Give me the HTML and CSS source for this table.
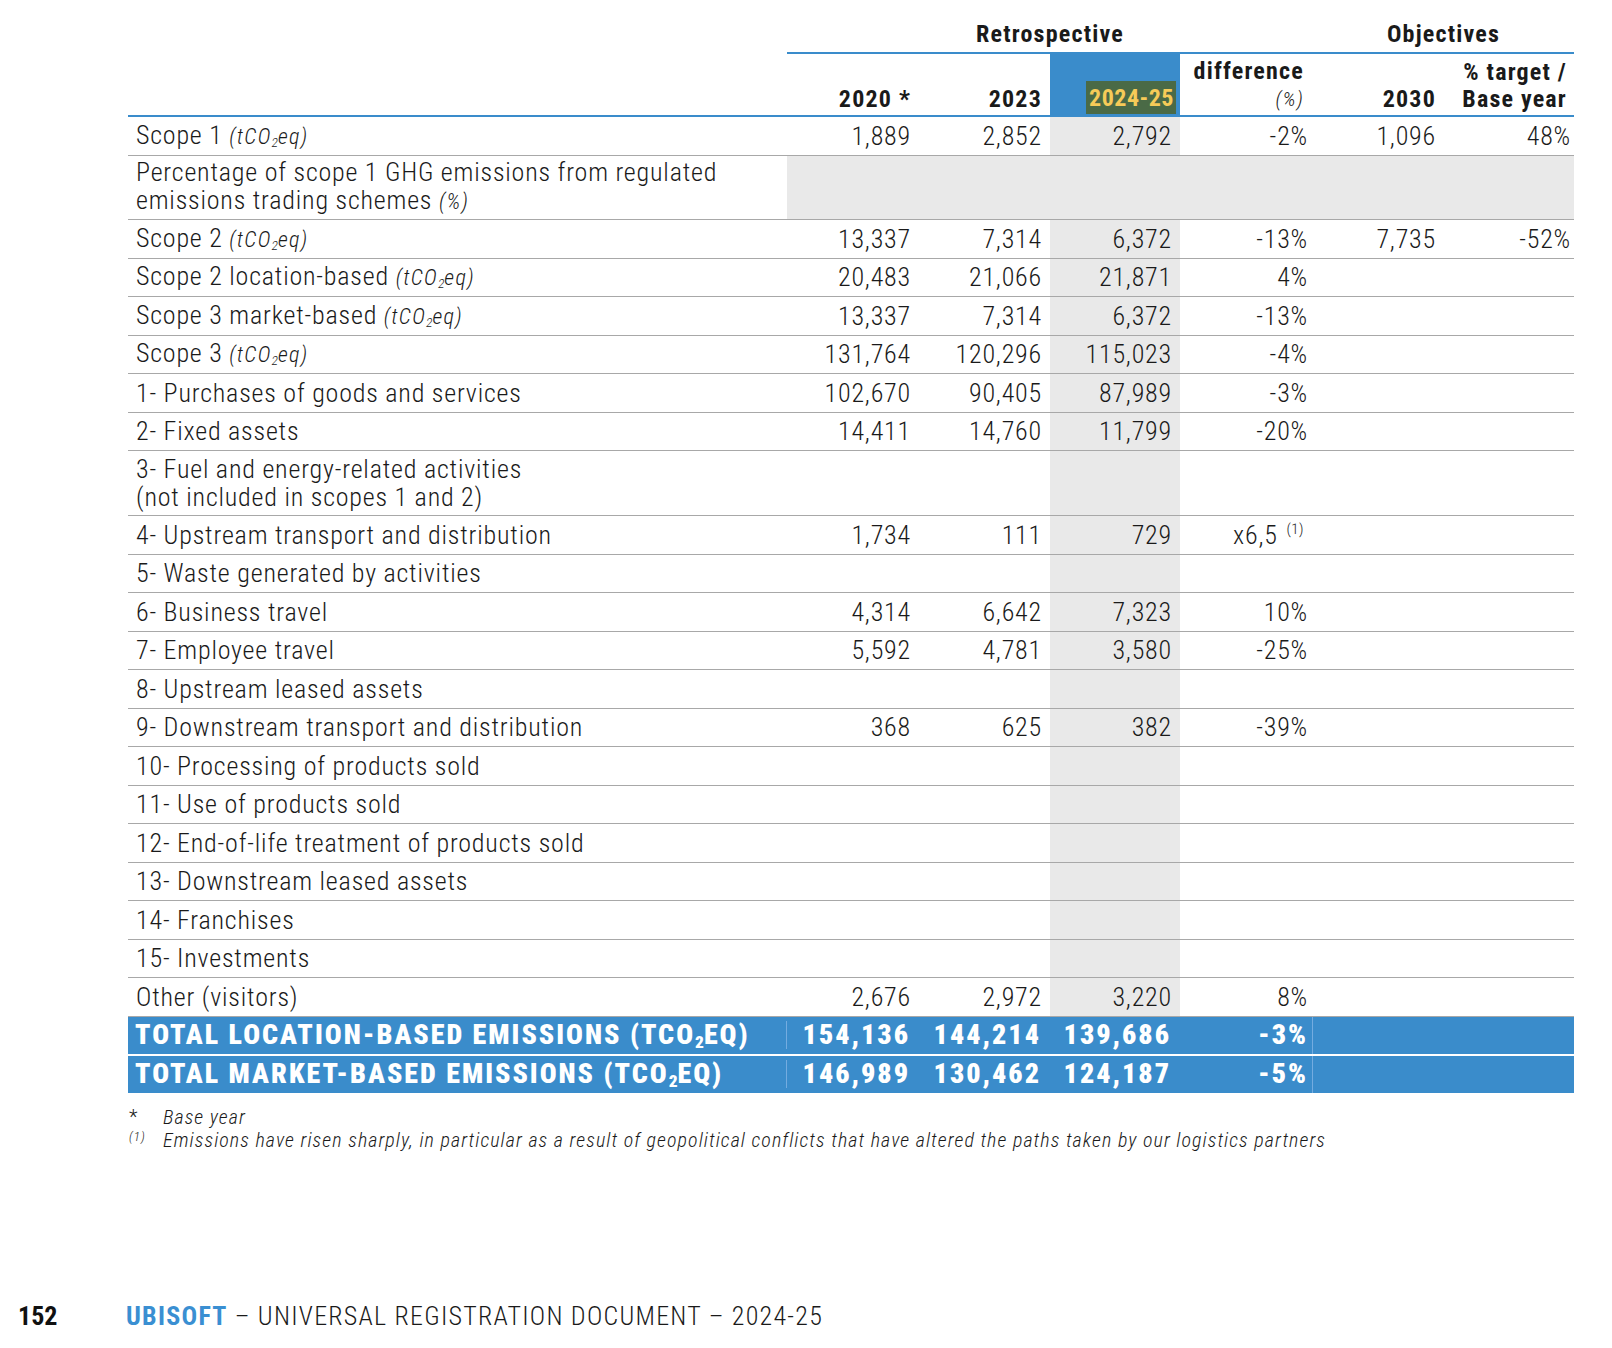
FILE: index.html
```html
<!DOCTYPE html>
<html lang="en">
<head>
<meta charset="utf-8">
<title>GHG emissions</title>
<link rel="stylesheet" href="styles.css">
</head>
<body>
<div class="page">
  <div class="table">
    <div class="row grp">
      <div class="c"></div>
      <div class="c gh span4">Retrospective</div>
      <div class="c gh span2">Objectives</div>
    </div>
    <div class="row hdr">
      <div class="c"></div>
      <div class="c n">2020 *</div>
      <div class="c n">2023</div>
      <div class="c n hlh"><span class="mark">2024-25</span></div>
      <div class="c n">difference<br><i class="unit">(%)</i></div>
      <div class="c n">2030</div>
      <div class="c n">% target /<br>Base year</div>
    </div>

    <div class="row"><div class="c l">Scope 1 <i class="u">(tCO<sub>2</sub>eq)</i></div><div class="c n">1,889</div><div class="c n">2,852</div><div class="c n g">2,792</div><div class="c n">-2%</div><div class="c n">1,096</div><div class="c n">48%</div></div>
    <div class="row dbl"><div class="c l">Percentage of scope 1 GHG emissions from regulated<br>emissions trading schemes <i class="u">(%)</i></div><div class="c n g"></div><div class="c n g"></div><div class="c n g"></div><div class="c n g"></div><div class="c n g"></div><div class="c n g"></div></div>
    <div class="row"><div class="c l">Scope 2 <i class="u">(tCO<sub>2</sub>eq)</i></div><div class="c n">13,337</div><div class="c n">7,314</div><div class="c n g">6,372</div><div class="c n">-13%</div><div class="c n">7,735</div><div class="c n">-52%</div></div>
    <div class="row"><div class="c l">Scope 2 location-based <i class="u">(tCO<sub>2</sub>eq)</i></div><div class="c n">20,483</div><div class="c n">21,066</div><div class="c n g">21,871</div><div class="c n">4%</div><div class="c n"></div><div class="c n"></div></div>
    <div class="row"><div class="c l">Scope 3 market-based <i class="u">(tCO<sub>2</sub>eq)</i></div><div class="c n">13,337</div><div class="c n">7,314</div><div class="c n g">6,372</div><div class="c n">-13%</div><div class="c n"></div><div class="c n"></div></div>
    <div class="row"><div class="c l">Scope 3 <i class="u">(tCO<sub>2</sub>eq)</i></div><div class="c n">131,764</div><div class="c n">120,296</div><div class="c n g">115,023</div><div class="c n">-4%</div><div class="c n"></div><div class="c n"></div></div>
    <div class="row"><div class="c l">1- Purchases of goods and services</div><div class="c n">102,670</div><div class="c n">90,405</div><div class="c n g">87,989</div><div class="c n">-3%</div><div class="c n"></div><div class="c n"></div></div>
    <div class="row"><div class="c l">2- Fixed assets</div><div class="c n">14,411</div><div class="c n">14,760</div><div class="c n g">11,799</div><div class="c n">-20%</div><div class="c n"></div><div class="c n"></div></div>
    <div class="row dbl"><div class="c l">3- Fuel and energy-related activities<br>(not included in scopes 1 and 2)</div><div class="c n"></div><div class="c n"></div><div class="c n g"></div><div class="c n"></div><div class="c n"></div><div class="c n"></div></div>
    <div class="row"><div class="c l">4- Upstream transport and distribution</div><div class="c n">1,734</div><div class="c n">111</div><div class="c n g">729</div><div class="c n ft"><span>x6,5 <sup class="ref">(1)</sup></span></div><div class="c n"></div><div class="c n"></div></div>
    <div class="row"><div class="c l">5- Waste generated by activities</div><div class="c n"></div><div class="c n"></div><div class="c n g"></div><div class="c n"></div><div class="c n"></div><div class="c n"></div></div>
    <div class="row"><div class="c l">6- Business travel</div><div class="c n">4,314</div><div class="c n">6,642</div><div class="c n g">7,323</div><div class="c n">10%</div><div class="c n"></div><div class="c n"></div></div>
    <div class="row"><div class="c l">7- Employee travel</div><div class="c n">5,592</div><div class="c n">4,781</div><div class="c n g">3,580</div><div class="c n">-25%</div><div class="c n"></div><div class="c n"></div></div>
    <div class="row"><div class="c l">8- Upstream leased assets</div><div class="c n"></div><div class="c n"></div><div class="c n g"></div><div class="c n"></div><div class="c n"></div><div class="c n"></div></div>
    <div class="row"><div class="c l">9- Downstream transport and distribution</div><div class="c n">368</div><div class="c n">625</div><div class="c n g">382</div><div class="c n">-39%</div><div class="c n"></div><div class="c n"></div></div>
    <div class="row"><div class="c l">10- Processing of products sold</div><div class="c n"></div><div class="c n"></div><div class="c n g"></div><div class="c n"></div><div class="c n"></div><div class="c n"></div></div>
    <div class="row"><div class="c l">11- Use of products sold</div><div class="c n"></div><div class="c n"></div><div class="c n g"></div><div class="c n"></div><div class="c n"></div><div class="c n"></div></div>
    <div class="row"><div class="c l">12- End-of-life treatment of products sold</div><div class="c n"></div><div class="c n"></div><div class="c n g"></div><div class="c n"></div><div class="c n"></div><div class="c n"></div></div>
    <div class="row"><div class="c l">13- Downstream leased assets</div><div class="c n"></div><div class="c n"></div><div class="c n g"></div><div class="c n"></div><div class="c n"></div><div class="c n"></div></div>
    <div class="row"><div class="c l">14- Franchises</div><div class="c n"></div><div class="c n"></div><div class="c n g"></div><div class="c n"></div><div class="c n"></div><div class="c n"></div></div>
    <div class="row"><div class="c l">15- Investments</div><div class="c n"></div><div class="c n"></div><div class="c n g"></div><div class="c n"></div><div class="c n"></div><div class="c n"></div></div>
    <div class="row"><div class="c l">Other (visitors)</div><div class="c n">2,676</div><div class="c n">2,972</div><div class="c n g">3,220</div><div class="c n">8%</div><div class="c n"></div><div class="c n"></div></div>

    <div class="row total"><div class="c l sep">TOTAL LOCATION-BASED EMISSIONS (TCO<sub>2</sub>EQ)</div><div class="c n">154,136</div><div class="c n">144,214</div><div class="c n">139,686</div><div class="c n sep">-3%</div><div class="c n"></div><div class="c n"></div></div>
    <div class="row total"><div class="c l sep">TOTAL MARKET-BASED EMISSIONS (TCO<sub>2</sub>EQ)</div><div class="c n">146,989</div><div class="c n">130,462</div><div class="c n">124,187</div><div class="c n sep">-5%</div><div class="c n"></div><div class="c n"></div></div>
  </div>

  <div class="notes">
    <div class="note"><span class="mk">*</span><span class="tx">Base year</span></div>
    <div class="note"><span class="mk"><sup>(1)</sup></span><span class="tx">Emissions have risen sharply, in particular as a result of geopolitical conflicts that have altered the paths taken by our logistics partners</span></div>
  </div>
</div>

<footer class="footer">
  <span class="pg">152</span>
  <span class="doc"><b class="brand">UBISOFT</b> – UNIVERSAL REGISTRATION DOCUMENT – 2024-25</span>
</footer>
</body>
</html>
```

FILE: styles.css
```css
html, body {
  margin: 0;
  padding: 0;
  background: #ffffff;
}

body {
  width: 1612px;
  height: 1348px;
  position: relative;
  font-family: "Roboto Condensed", "Liberation Sans Narrow", "Liberation Sans", sans-serif;
  color: #1a1a1a;
  overflow: hidden;
}

.page {
  padding: 0 38px 0 128px;
}

.table {
  width: 1446px;
}

.row {
  display: grid;
  grid-template-columns: 659px 132px 131px 130px 133px 131px 130px;
  height: 38.5px;
  box-sizing: border-box;
  border-bottom: 1.5px solid #a8a8a8;
  font-size: 26px;
  font-weight: 300;
  letter-spacing: 0.8px;
  line-height: 28.5px;
}

.row.dbl {
  height: 64.8px;
}

.c {
  display: flex;
  align-items: center;
  box-sizing: border-box;
  min-width: 0;
}

.c.l {
  padding-left: 8px;
  white-space: nowrap;
  display: block;
  align-self: center;
}

.c.n {
  justify-content: flex-end;
  text-align: right;
  padding-right: 8px;
}

.row > .c:nth-child(5) { padding-right: 5px; }
.row > .c:nth-child(7) { padding-right: 3px; }
.row > .c.ft { padding-right: 9px; }

.c.g {
  background: #e9e9e9;
}

.u {
  font-size: 22px;
  font-style: italic;
  letter-spacing: 1.3px;
}

sub {
  font-size: 0.62em;
  vertical-align: -0.25em;
  line-height: 0;
  letter-spacing: 0;
}

.ref {
  font-size: 15px;
  vertical-align: 0.65em;
  line-height: 0;
  letter-spacing: 0.5px;
  margin-left: 2px;
}

/* group header */
.row.grp {
  grid-template-columns: 659px 526px 261px;
  height: 54px;
  border-bottom: none;
  font-weight: bold;
  font-size: 24px;
  letter-spacing: 1.2px;
  line-height: 26px;
}

.c.gh {
  justify-content: center;
  align-items: flex-end;
  padding-bottom: 5px;
  border-bottom: 2px solid #3a8ccb;
}

/* column header */
.row.hdr {
  height: 63px;
  border-bottom: 2.5px solid #3a8ccb;
  font-weight: bold;
  font-size: 24px;
  letter-spacing: 1.2px;
  line-height: 26.5px;
}

.row.hdr .c.n {
  display: block;
  align-self: end;
  padding-bottom: 3px;
}

.row.hdr > .c:nth-child(5) { padding-right: 9px; }
.row.hdr > .c:nth-child(7) { padding-right: 7px; }

.row.hdr .c.hlh {
  align-self: stretch;
  display: flex;
  align-items: flex-end;
  background: #3a8ccb;
  padding-bottom: 1px;
  padding-right: 4px;
}

.mark {
  display: inline-block;
  background: #4a6a46;
  color: #f6cb58;
  padding: 4px 2px 3px 3px;
  line-height: 26px;
  letter-spacing: 0.5px;
}

.unit {
  font-weight: 300;
  font-size: 21px;
}

/* totals */
.row.total {
  height: 37px;
  background: #3a8ccb;
  color: #ffffff;
  border-bottom: none;
  font-weight: 900;
  font-size: 28px;
  letter-spacing: 2px;
}

.row.total + .row.total {
  margin-top: 2px;
}

.row.total .c.n {
  padding-right: 9px;
}

.row.total > .c:nth-child(5) { padding-right: 4px; }

.row.total .c.l {
  padding-left: 7px;
}

.c.sep {
  border-right: 1px solid #74ace0;
}

/* footnotes */
.notes {
  margin-top: 13px;
  font-style: italic;
  font-weight: 300;
  font-size: 20px;
  letter-spacing: 1.05px;
  line-height: 23.5px;
}

.note {
  display: flex;
}

.mk {
  width: 34px;
  padding-left: 1px;
  font-style: normal;
  flex: none;
}

.mk sup {
  font-size: 13px;
  font-style: italic;
  vertical-align: 0.5em;
  line-height: 0;
}

/* footer */
.footer {
  position: absolute;
  left: 18px;
  top: 1301px;
  font-size: 26px;
  line-height: 30px;
  display: flex;
  white-space: nowrap;
  letter-spacing: 1.25px;
  font-weight: 300;
}

.pg {
  font-weight: bold;
  width: 108px;
  color: #111;
  letter-spacing: 0;
}

.brand {
  color: #3a8fd2;
  font-weight: bold;
}
```
